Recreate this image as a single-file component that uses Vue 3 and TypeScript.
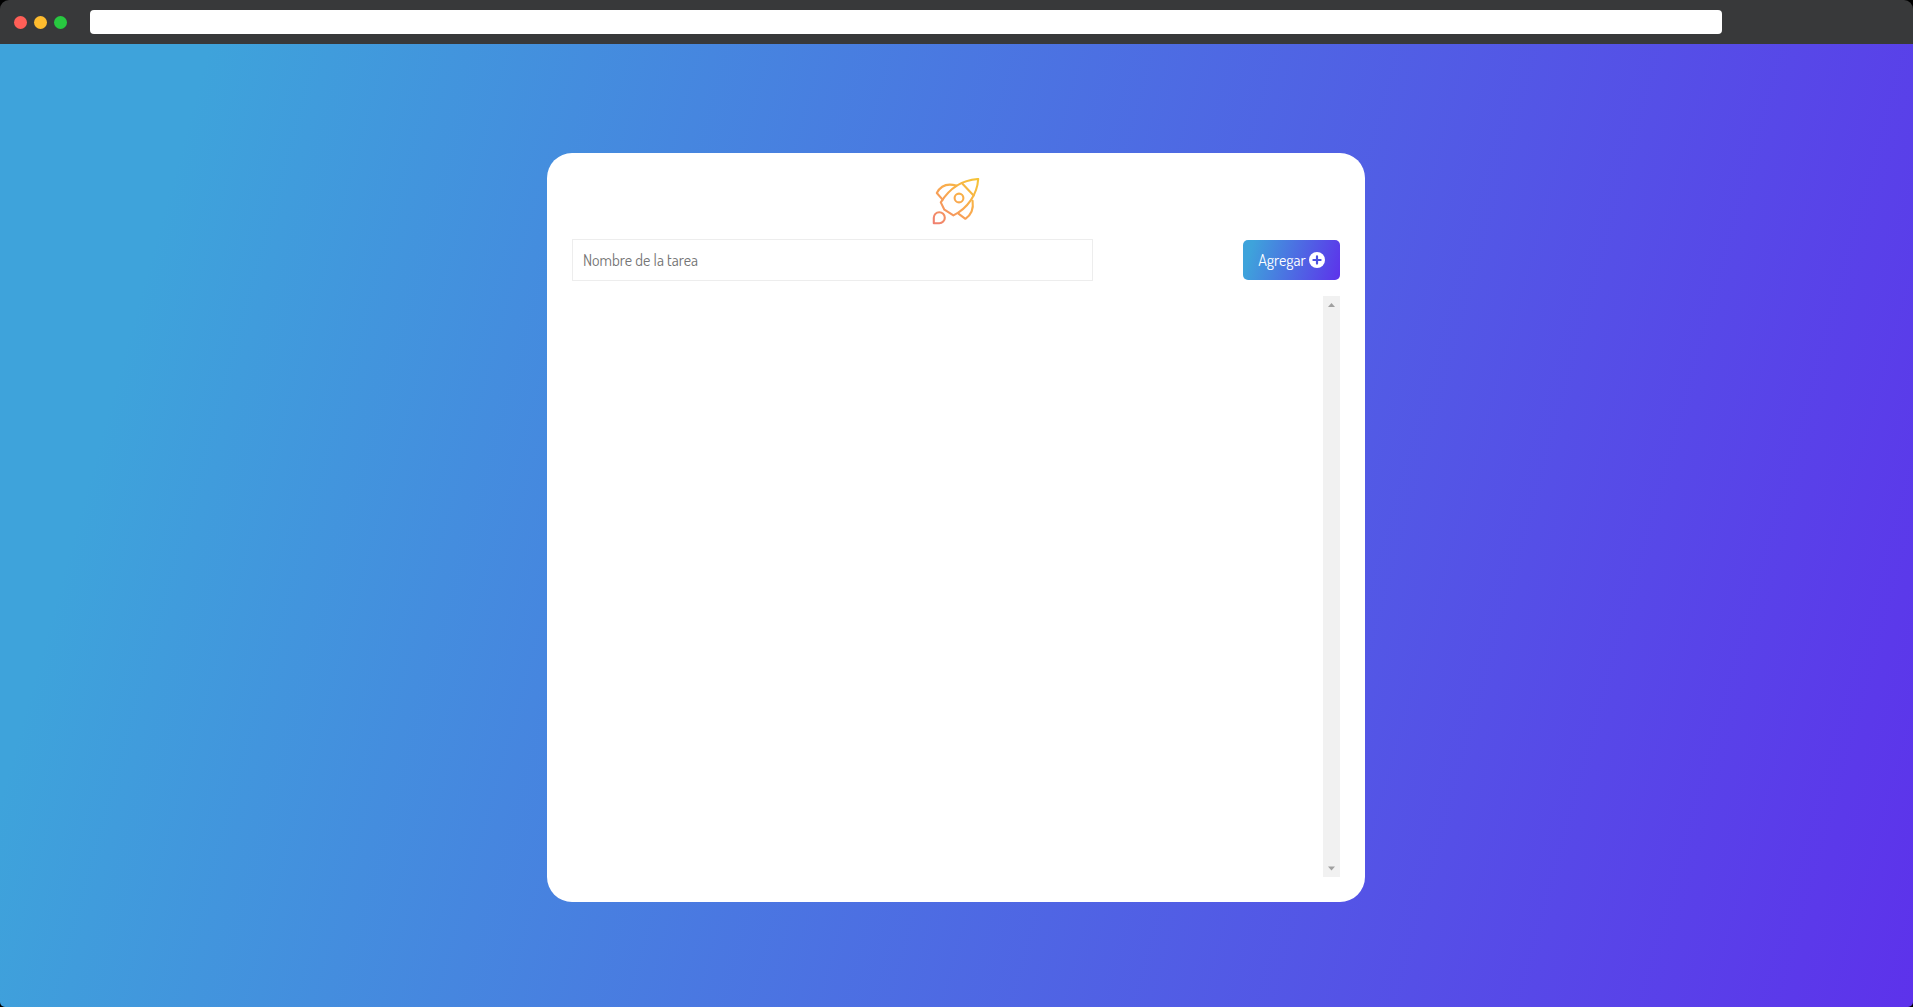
<script setup lang="ts">
import { ref } from 'vue'

const lights: string[] = ['red', 'amber', 'green']
const taskName = ref<string>('')
</script>

<template>
  <div class="window">
    <header class="titlebar">
      <div class="lights">
        <span v-for="light in lights" :key="light" class="light" :class="light"></span>
      </div>
      <div class="address"></div>
    </header>
    <main class="page">
      <section class="card">
        <svg class="rocket" viewBox="12 13 48 48" fill="none" stroke="url(#flame)" stroke-width="2.1" stroke-linejoin="round" stroke-linecap="round">
          <defs>
            <linearGradient id="flame" gradientUnits="userSpaceOnUse" x1="56" y1="14" x2="15" y2="59">
              <stop offset="0" stop-color="#f5c338" />
              <stop offset="0.5" stop-color="#f9a850" />
              <stop offset="1" stop-color="#f08070" />
            </linearGradient>
          </defs>
          <path d="M58.2 14C44.5 14.8 31 21 20.8 37.4L24.4 44.7L33.4 50.4C47.5 43.5 57.2 29.5 58.2 14Z" />
          <path d="M42 18.3L53.6 30.5" />
          <circle cx="39" cy="33" r="4.4" />
          <path d="M22.6 34.6L16.8 28C20.8 20.4 27 18 36.2 20.6" />
          <path d="M52.6 35.8C53.8 44 50.8 50 45.4 53.8L38.4 48.6" />
          <path d="M13.8 58.2V52.8A5.5 5.5 0 1 1 19.3 58.2Z" />
        </svg>
        <form class="entry" @submit.prevent>
          <input v-model="taskName" type="text" placeholder="Nombre de la tarea" />
          <button type="submit">
            <span>Agregar</span>
            <svg class="plus" viewBox="0 0 16 16">
              <circle cx="8" cy="8" r="8" fill="#fff" />
              <path d="M8 4.4V11.6M4.4 8H11.6" stroke="#4b50df" stroke-width="2.2" stroke-linecap="round" />
            </svg>
          </button>
        </form>
        <div class="list">
          <div class="scrollbar">
            <svg viewBox="0 0 17 17"><path d="M5 11L8.5 7L12 11Z" fill="#a0a0a0" /></svg>
            <svg viewBox="0 0 17 17"><path d="M5 6.5L8.5 10.5L12 6.5Z" fill="#a0a0a0" /></svg>
          </div>
        </div>
      </section>
    </main>
  </div>
</template>

<style>
body {
  margin: 0;
  background: #000;
}
</style>

<style scoped>
.window {
  display: flex;
  flex-direction: column;
  height: 100vh;
  overflow: hidden;
  border-radius: 9px 9px 5px 5px;
  font-family: Dosis, 'Open Sans', 'Noto Sans', sans-serif;
  font-stretch: 75%;
}
.titlebar {
  display: flex;
  align-items: center;
  flex: none;
  height: 44px;
  padding-left: 13.5px;
  background: #38393a;
}
.lights {
  display: flex;
  gap: 7px;
  width: 76.5px;
}
.light {
  width: 13px;
  height: 13px;
  border-radius: 50%;
}
.red { background: #ff5f57; }
.amber { background: #febc2e; }
.green { background: #28c840; }
.address {
  width: 1632px;
  height: 24px;
  border-radius: 4px;
  background: #fff;
}
.page {
  display: flex;
  flex: 1;
  justify-content: center;
  align-items: flex-start;
  padding: 109px 1px 0 0;
  background: linear-gradient(105.5deg, rgb(62, 163, 219) 9.6%, rgb(93, 50, 235) 100%);
}
.card {
  box-sizing: border-box;
  display: flex;
  flex-direction: column;
  width: 818px;
  height: 749px;
  padding: 25px;
  border-radius: 25px;
  background: #fff;
}
.rocket {
  flex: none;
  align-self: center;
  width: 48px;
  height: 48px;
}
.entry {
  display: flex;
  justify-content: space-between;
  align-items: center;
  height: 42px;
  margin: 13px 0 15px;
}
input {
  box-sizing: border-box;
  width: 521px;
  height: 42px;
  padding: 0 10px;
  border: 1px solid #ededed;
  outline: none;
  font: inherit;
  font-size: 16px;
}
input::placeholder {
  color: #757575;
}
button {
  display: flex;
  align-items: center;
  justify-content: center;
  gap: 3px;
  width: 97px;
  height: 40px;
  padding: 0;
  border: 0;
  border-radius: 5px;
  background: linear-gradient(105.5deg, rgb(62, 163, 219) 9.6%, rgb(93, 50, 235) 100%);
  color: #fff;
  font: inherit;
  font-size: 16px;
}
.plus {
  width: 16px;
  height: 16px;
}
.list {
  display: flex;
  flex: 1;
  justify-content: flex-end;
}
.scrollbar {
  display: flex;
  flex-direction: column;
  justify-content: space-between;
  width: 17px;
  background: #f1f1f1;
}
.scrollbar svg {
  width: 17px;
  height: 17px;
}
</style>
